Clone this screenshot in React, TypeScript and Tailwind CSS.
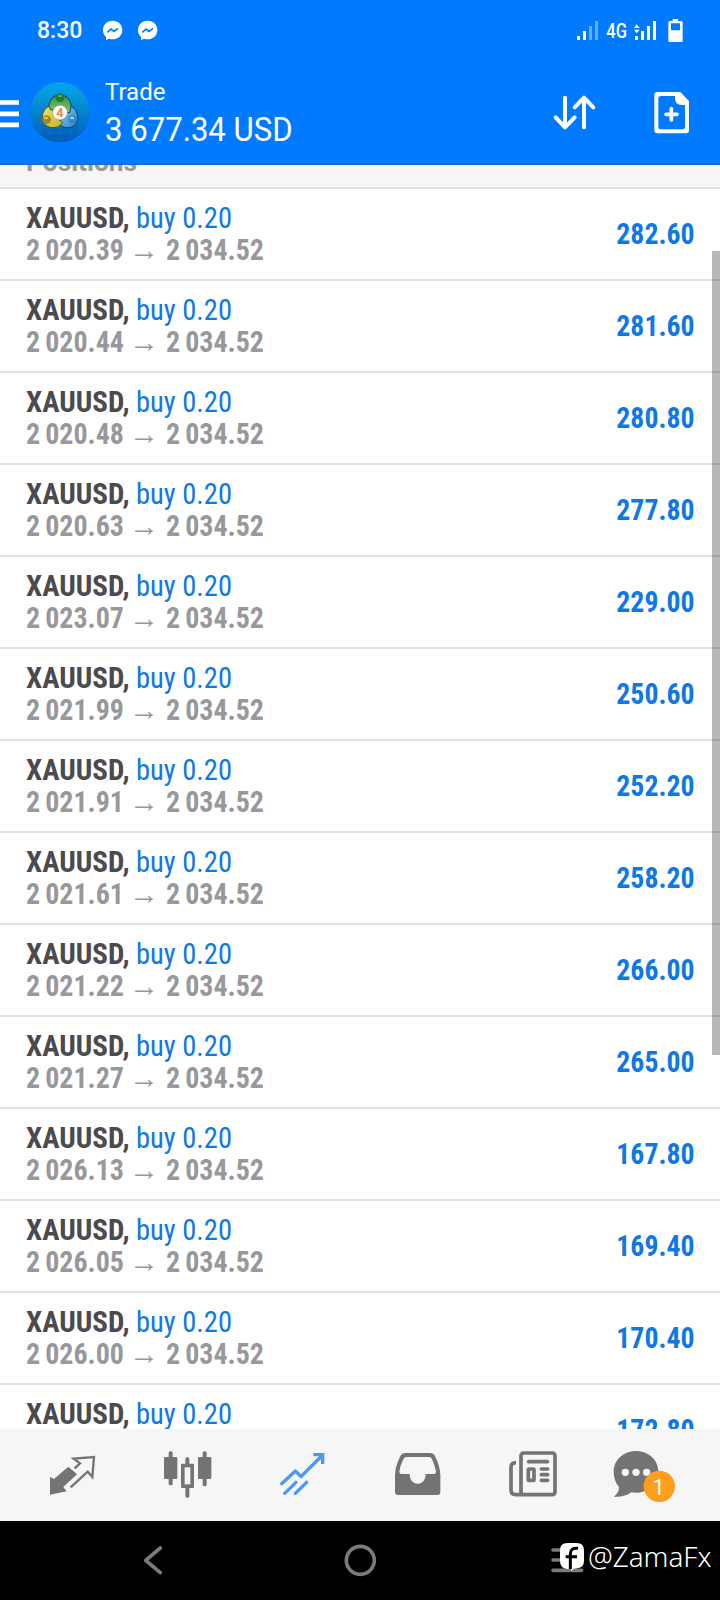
const rows: [string, string][] = [
  ["2 020.39", "282.60"],
  ["2 020.44", "281.60"],
  ["2 020.48", "280.80"],
  ["2 020.63", "277.80"],
  ["2 023.07", "229.00"],
  ["2 021.99", "250.60"],
  ["2 021.91", "252.20"],
  ["2 021.61", "258.20"],
  ["2 021.22", "266.00"],
  ["2 021.27", "265.00"],
  ["2 026.13", "167.80"],
  ["2 026.05", "169.40"],
  ["2 026.00", "170.40"],
  ["2 025.88", "172.80"],
];

function Messenger() {
  return (
    <svg viewBox="306 58 63 63" className="h-[21px] w-[21px]">
      <path fill="#fff" d="M338 60c-17 0-29 12-29 28 0 9 3 16 9 21v10l9-5c3 1 7 2 11 2 17 0 29-12 29-28s-12-28-29-28z" />
      <path fill="none" stroke="#007aff" strokeWidth="5" d="M322 95l11-10 9 7 12-9" />
    </svg>
  );
}

function StatusBar() {
  return (
    <div className="flex h-[61px] items-center pl-[37px] pr-[36px] text-white">
      <span className="text-[23px] font-medium leading-none">8:30</span>
      <span className="ml-[20px] flex gap-[14px]">
        <Messenger />
        <Messenger />
      </span>
      <svg viewBox="648 51 324 75" className="ml-auto h-[25px] w-[108px]">
        <g fill="#fff">
          <rect x="651" y="105" width="9" height="12" />
          <rect x="669" y="90" width="9" height="27" />
          <rect x="687" y="75" width="9" height="42" opacity=".4" />
          <rect x="705" y="60" width="9" height="57" opacity=".4" />
          <text x="739" y="111" fontSize="60" fontWeight="500" textLength="62" lengthAdjust="spacingAndGlyphs">4G</text>
          <path d="M822 81l8-11 9 11zM822 86h17l-9 11z" />
          <rect x="825" y="105" width="9" height="12" />
          <rect x="843" y="90" width="9" height="27" />
          <rect x="861" y="75" width="9" height="42" />
          <rect x="879" y="60" width="9" height="57" />
          <path fillRule="evenodd" d="M938 54h16v6h10q4 0 4 4v55q0 4-4 4h-35q-4 0-4-4V64q0-4 4-4h9zM933 67v21h27V67z" />
        </g>
      </svg>
    </div>
  );
}

function Logo() {
  return (
    <svg viewBox="90 246 180 182" className="ml-[11px] h-[60.67px] w-[60px]">
      <defs>
        <linearGradient id="bg" x1="0" y1="0" x2="0" y2="1">
          <stop offset="0" stopColor="#04a9ea" />
          <stop offset="1" stopColor="#0259b4" />
        </linearGradient>
        <linearGradient id="gr" x1="0" y1="0" x2="0" y2="1">
          <stop offset="0" stopColor="#2f8f45" />
          <stop offset="1" stopColor="#86c872" />
        </linearGradient>
        <linearGradient id="ye" x1="0" y1="0" x2="1" y2="1">
          <stop offset="0" stopColor="#efe36a" />
          <stop offset="1" stopColor="#c3b02e" />
        </linearGradient>
        <linearGradient id="bl" x1="0" y1="0" x2="1" y2="1">
          <stop offset="0" stopColor="#8cc8ee" />
          <stop offset="1" stopColor="#2a86cf" />
        </linearGradient>
      </defs>
      <circle cx="180" cy="337" r="90" fill="url(#bg)" />
      <path d="M112 280h136M100 307h160M92 340h176M98 370h164M112 398h136M120 275v124M150 258v160M180 250v176M212 258v160M240 275v124" stroke="#3fb0ee" strokeWidth="1.5" opacity=".25" />
      <g strokeWidth="3" strokeLinejoin="round">
        <path fill="url(#bl)" stroke="#10426f" d="M204 318c14 0 28 12 29 34 1 18-12 31-30 31-14 0-25-8-28-18l22-14z" />
        <path fill="url(#ye)" stroke="#565216" d="M157 316c-18 2-30 18-30 36 0 19 14 31 33 31 12 0 22-6 28-15l-26-20z" />
        <path fill="url(#gr)" stroke="#17482c" d="M147 320c0-20 13-35 33-35s33 15 33 35l-4 18h-14l-15-18-15 10-13-1z" />
      </g>
      <circle cx="180" cy="293" r="13" fill="#1f7a36" />
      <ellipse cx="179" cy="288" rx="6" ry="3" fill="#66b870" />
      <circle cx="140" cy="359" r="13" fill="#a08a20" />
      <ellipse cx="138" cy="354" rx="6" ry="4" fill="#d8ca68" />
      <circle cx="217" cy="358" r="12" fill="#2f86d0" />
      <ellipse cx="216" cy="354" rx="6" ry="4" fill="#a9dcff" />
      <circle cx="180" cy="338" r="22" fill="#fff" stroke="#8a9a8a" strokeWidth="1.5" />
      <text x="180" y="351" textAnchor="middle" fontSize="38" fontWeight="700" fill="#f0873c">4</text>
    </svg>
  );
}

function Header() {
  return (
    <div className="flex h-[103px] items-center text-white">
      <svg viewBox="0 288 57 99" className="h-[33px] w-[19px]">
        <path stroke="#fff" strokeWidth="14" d="M0 307.5h57M0 341.5h57M0 374.5h57" />
      </svg>
      <Logo />
      <div className="ml-[15px]">
        <div className="origin-left scale-x-[.98] pt-[2px] text-[24.5px] leading-[30px]">Trade</div>
        <div className="mt-[3px] origin-left scale-x-[.943] text-[33px] leading-[40px]">3 677.34 USD</div>
      </div>
      <svg viewBox="576 270 135 135" className="ml-auto h-[45px] w-[45px]" fill="none" stroke="#fff" strokeWidth="12" strokeLinecap="round" strokeLinejoin="round">
        <path d="M615 293v89M587 352l28 30 29-30M672 382v-88M644 322l28-29 28 29" />
      </svg>
      <svg viewBox="876 270 120 135" className="ml-[55px] mr-[28px] h-[45px] w-[40px]">
        <path fill="#fff" fillRule="evenodd" d="M892 276h69l26 27v88q0 9-9 9h-86q-9 0-9-9v-106q0-9 9-9zM903 288q-8 0-8 8v84q0 8 8 8h64q8 0 8-8v-65h-10q-20 0-20-20v-7z" />
        <path stroke="#fff" strokeWidth="11" strokeLinecap="round" d="M918 343h33M934 326v34" />
      </svg>
    </div>
  );
}

function Row({ open, profit }: { open: string; profit: string }) {
  return (
    <div className="flex h-[92px] shrink-0 justify-between border-b-2 border-[#e2e2e2] bg-white pl-[26px] pr-[25.5px] font-['Roboto_Condensed',Roboto,sans-serif] text-[30px] leading-[32px] [font-stretch:75%]">
      <div className="pt-[13px]">
        <div className="flex">
          <span className="w-[110px] origin-left scale-x-[.965] font-bold text-[#4a4a4f]">XAUUSD,</span>
          <span className="origin-left scale-x-[.95] text-[#0f78e3]">buy 0.20</span>
        </div>
        <div className="flex font-bold text-[#97989b]">
          <span className="w-[107.5px] origin-left scale-x-[.932] [word-spacing:-1.5px]">{open}</span>
          <span className="relative -left-[4.5px] w-[32px]">→</span>
          <span className="origin-left scale-x-[.932] [word-spacing:-1.5px]">2 034.52</span>
        </div>
      </div>
      <div className="origin-right scale-x-[.925] pt-[29px] font-bold text-[#0f78e3]">{profit}</div>
    </div>
  );
}

const cell = "h-[72px] w-[72px]";

function BottomNav() {
  return (
    <div className="grid h-[92px] shrink-0 grid-cols-6 place-items-center bg-[#f6f6f6] pl-[14px] pr-[16px]">
      <svg viewBox="108 207 216 216" className={cell}>
        <path fill="#747474" d="M150 321l12 6 43-37 26 23-41 38 10 13-50 10z" />
        <path fill="none" stroke="#747474" strokeWidth="7" d="M224 295l16-15-19-14 61-5-5 60-14-16-51 47" />
      </svg>
      <svg viewBox="453 207 216 216" className={cell}>
        <g fill="#747474">
          <rect x="492" y="261" width="40" height="66" rx="4" />
          <rect x="506" y="244" width="12" height="102" rx="5" />
          <rect x="594" y="261" width="40" height="66" rx="4" />
          <rect x="608" y="244" width="12" height="105" rx="5" />
          <rect x="543" y="281" width="39" height="73" rx="4" />
          <rect x="556" y="262" width="12" height="121" rx="5" />
        </g>
        <rect x="554" y="292" width="17" height="51" fill="#f6f6f6" />
      </svg>
      <svg viewBox="798 207 216 216" className={cell} fill="none" stroke="#4a9af0" strokeWidth="10" strokeLinecap="round" strokeLinejoin="round">
        <path d="M845 341l41-38 17 17 62-62M854 370l34-33M886 370l34-33" />
        <path d="M940 254h28v28" strokeLinecap="butt" strokeLinejoin="miter" />
      </svg>
      <svg viewBox="63 207 216 216" className={cell}>
        <path fill="#747474" fillRule="evenodd" d="M137 249h73q11 0 15 9 15 30 16 56v52q0 9-9 9h-118q-9 0-9-9v-52q1-26 16-56 5-9 16-9zM139 261q-6 0-9 7-10 20-12 37 0 7 6 7h25c0 17 9 29 24 29s24-12 24-29h25q6 0 6-7-3-18-12-37-3-7-9-7z" />
      </svg>
      <svg viewBox="408 207 216 216" className={cell} fill="none" stroke="#747474" strokeWidth="11">
        <rect x="483" y="249" width="102" height="125" rx="8" />
        <path d="M468 278q-15 0-15 14v68q0 14 15 14h20" />
        <g strokeLinecap="round">
          <path d="M506 275h56M544 297h19M544 314h19M544 331h19" />
        </g>
        <rect x="505" y="297" width="17" height="34" rx="2" />
      </svg>
      <svg viewBox="753 207 216 216" className={cell}>
        <path fill="#747474" d="M828 243c38 0 67 27 67 62s-29 63-67 63c-5 0-10 0-14-1-13 10-33 15-53 13 12-9 17-18 16-29-10-12-16-27-16-46 0-35 29-62 67-62z" />
        <g fill="#f6f6f6">
          <circle cx="796" cy="307" r="11" />
          <circle cx="828" cy="307" r="11" />
          <circle cx="860" cy="307" r="11" />
        </g>
        <circle cx="898" cy="349" r="47" fill="#ff9d1c" />
        <text x="896" y="374" textAnchor="middle" fontSize="66" fill="#fff">1</text>
      </svg>
    </div>
  );
}

function SystemBar() {
  return (
    <div className="relative flex h-[79px] shrink-0 items-start bg-black">
      <svg viewBox="426 453 720 237" className="ml-[142px] h-[79px] w-[240px] shrink-0" fill="none" stroke="#7b7b7b" strokeWidth="11" strokeLinecap="round" strokeLinejoin="round">
        <path d="M481 534l-44 37 44 37" />
        <circle cx="1081" cy="571" r="42" />
      </svg>
      <div className="absolute left-[550px] top-[18px] flex items-center text-white">
        <svg viewBox="570 510 108 108" className="h-[36px] w-[36px]">
          <path stroke="#7b7b7b" strokeWidth="11" strokeLinecap="round" d="M579 543h86M579 573h86M579 604h86" />
          <path fill="#fff" d="M622 522h28q22 0 22 22v32q0 20-20 22l-12 2-7 7v-7h-11q-22-2-22-24v-32q0-22 22-22z" />
          <path fill="none" stroke="#000" strokeWidth="9" d="M654 538c-16-2-22 4-23 16v46M617 563h34" />
        </svg>
        <span className="ml-[2px] font-['Noto_Sans'] text-[27.8px] font-[350] leading-none">@ZamaFx</span>
      </div>
    </div>
  );
}

export default function App() {
  return (
    <div className="flex h-[1600px] w-[720px] flex-col overflow-hidden bg-black font-[Roboto,sans-serif]">
      <div className="h-[165px] shrink-0 border-b border-[#1d68bd] bg-[#007aff]">
        <StatusBar />
        <Header />
      </div>
      <div className="relative flex h-[1264px] shrink-0 flex-col overflow-hidden bg-white">
        <div className="flex h-[24px] shrink-0 items-end border-b-2 border-[#e2e2e2] bg-[#f6f6f6] pb-[10px] pl-[26px]">
          <span className="text-[26.3px] font-bold leading-[30px] text-[#97989b]">Positions</span>
        </div>
        {rows.map(([open, profit]) => (
          <Row key={open} open={open} profit={profit} />
        ))}
        <div className="absolute right-0 top-[86px] h-[804px] w-[8px] bg-black/28" />
      </div>
      <BottomNav />
      <SystemBar />
    </div>
  );
}
